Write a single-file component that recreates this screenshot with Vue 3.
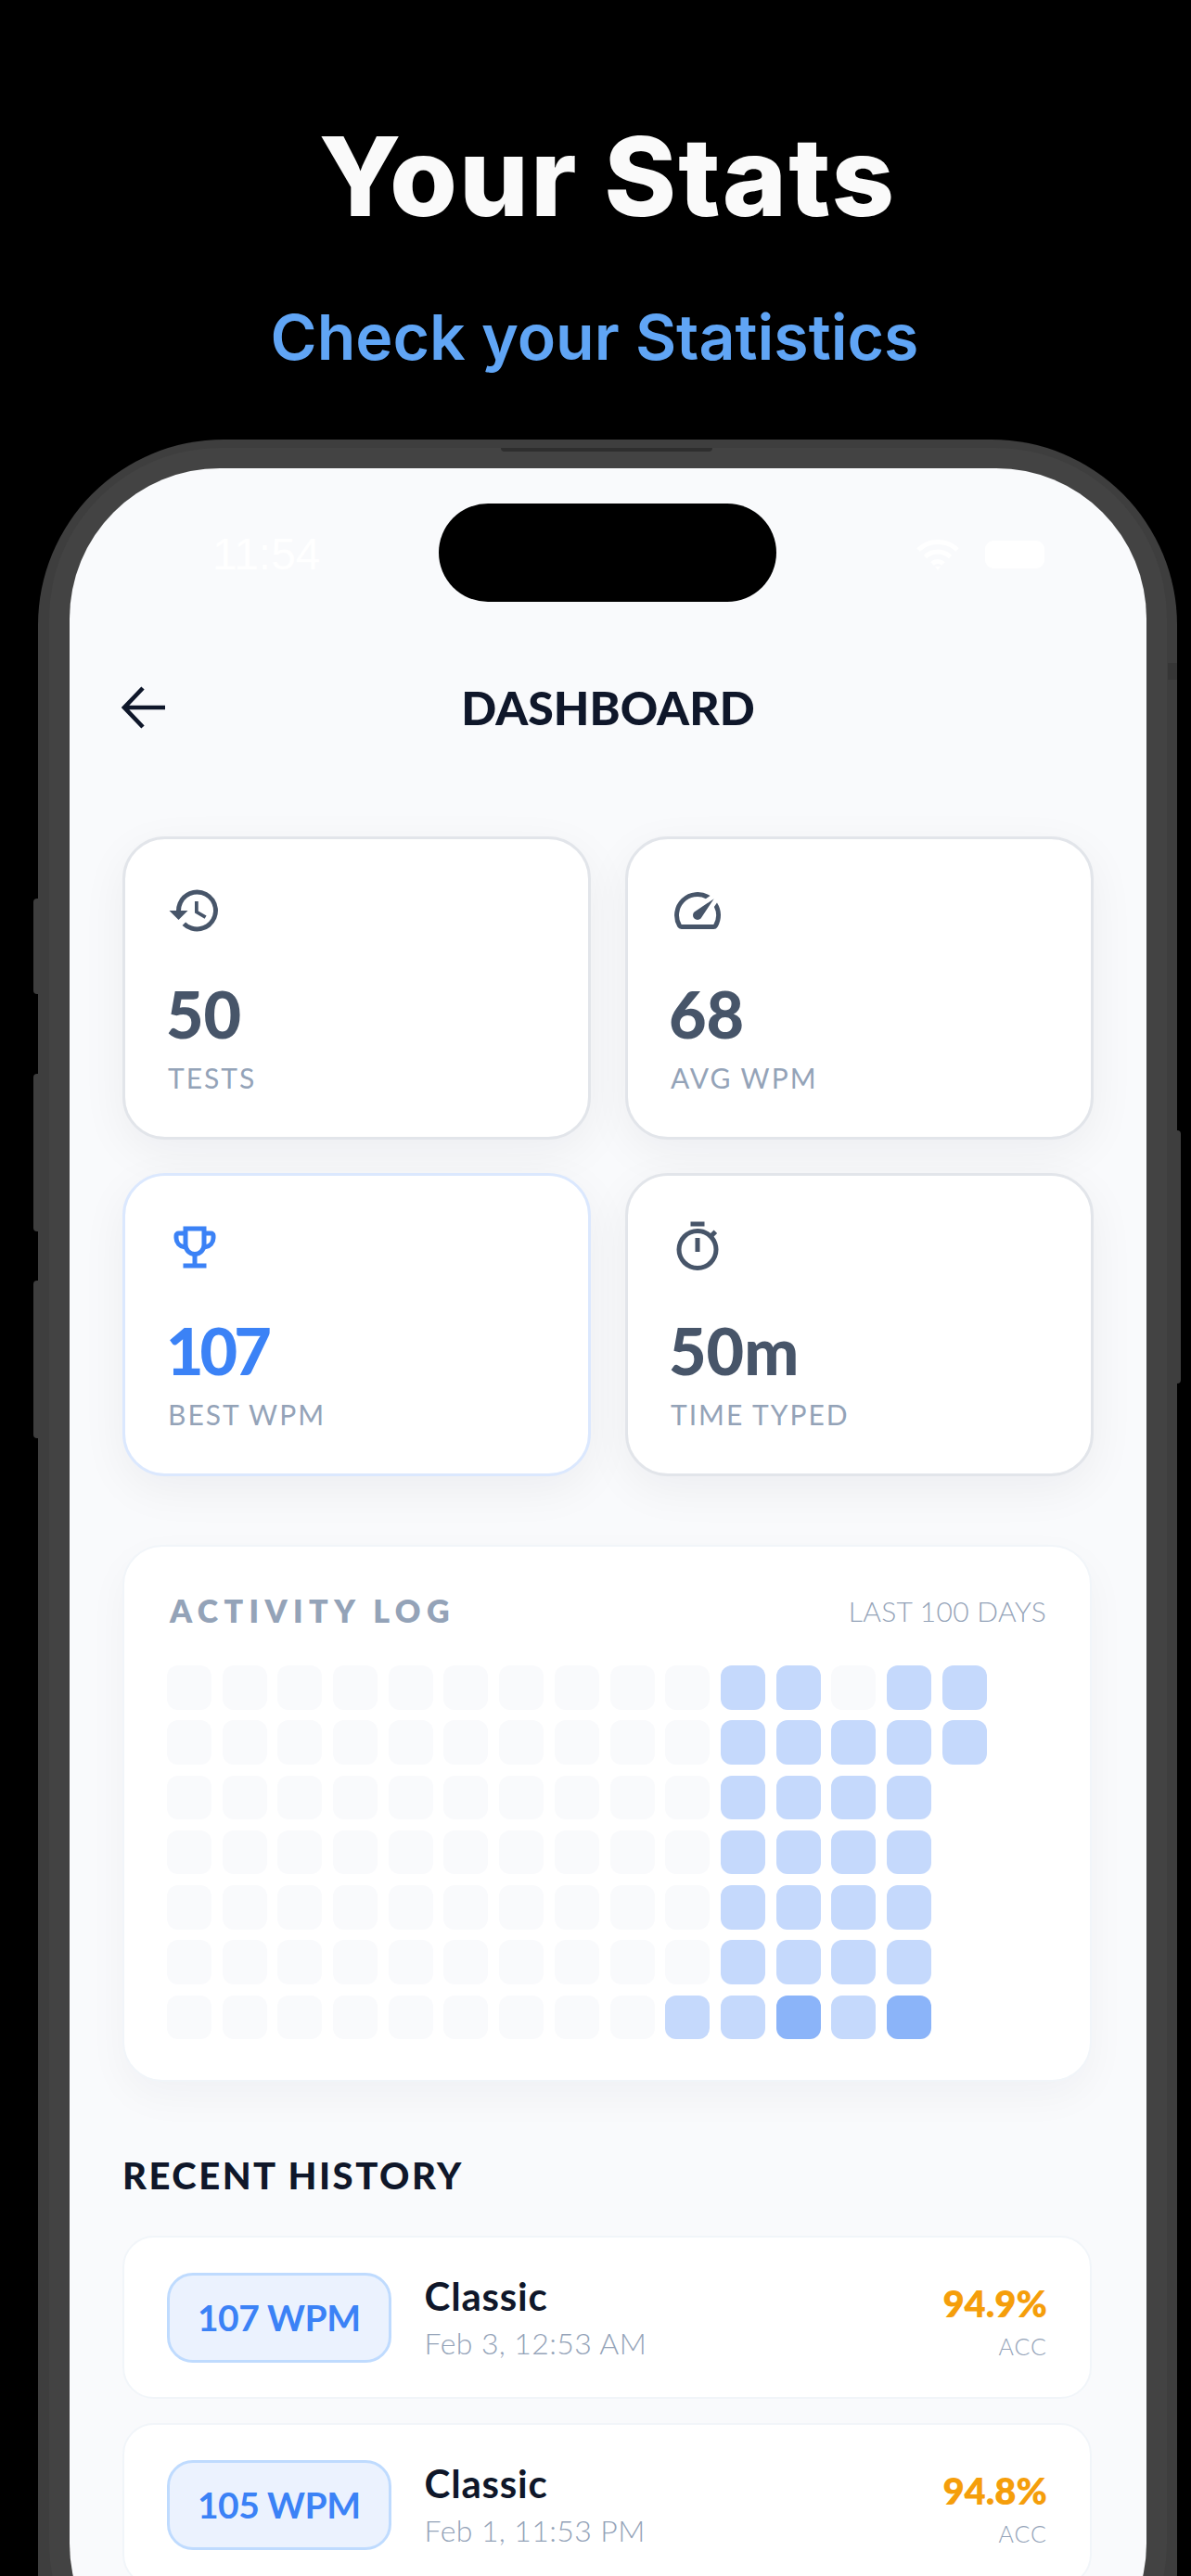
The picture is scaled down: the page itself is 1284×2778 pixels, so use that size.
<script setup>
const stats = [
  { value: '50', label: 'TESTS', icon: 'history' },
  { value: '68', label: 'AVG WPM', icon: 'gauge' },
  { value: '107', label: 'BEST WPM', icon: 'trophy', best: true },
  { value: '50m', label: 'TIME TYPED', icon: 'timer' },
]
const cells = []
for (let c = 0; c < 15; c++) {
  for (let r = 0; r < 7; r++) {
    if (c === 14 && r > 1) continue
    let k = ''
    if (c === 9 && r === 6) k = 'l'
    if (c >= 10 && c <= 13) k = 'l'
    if (c === 12 && r === 0) k = ''
    if ((c === 11 || c === 13) && r === 6) k = 'd'
    if (c === 14) k = 'l'
    cells.push(k)
  }
}
const history = [
  { wpm: '107 WPM', date: 'Feb 3, 12:53 AM', acc: '94.9%' },
  { wpm: '105 WPM', date: 'Feb 1, 11:53 PM', acc: '94.8%' },
]
</script>

<template>
  <div class="page">
    <header class="hero">
      <h1>Your Stats</h1>
      <p>Check your Statistics</p>
    </header>
    <div class="phone">
      <i class="btn b1"></i><i class="btn b2"></i><i class="btn b3"></i><i class="btn b4"></i>
      <i class="band"></i>
      <div class="screen">
        <div class="island"></div>
        <div class="status">
          <span class="time">11:54</span>
          <div class="sys">
            <svg width="48" height="36" viewBox="0 0 48 36" fill="none" stroke="#fff" stroke-width="5">
              <path d="M3 13a30 30 0 0 1 42 0"/>
              <path d="M10.500 20.500a19.500 19.500 0 0 1 27 0"/>
              <path d="M18 28a8.500 8.500 0 0 1 12 0"/>
              <path d="M24 35l-3-4h6z" fill="#fff" stroke="none"/>
            </svg>
            <i class="batt"></i>
          </div>
        </div>
        <div class="nav">
          <svg class="back" width="48" height="46" viewBox="0 0 48 46" fill="none" stroke="#0f172a" stroke-width="4.6"><path d="M47 23H3M23 2 3 23l20 21"/></svg>
          <h2>DASHBOARD</h2>
        </div>
        <div class="stats">
          <div v-for="s in stats" :key="s.label" class="stat" :class="{ best: s.best }">
            <svg class="ico" viewBox="0 0 24 24" fill="currentColor">
              <path v-if="s.icon === 'history'" d="M13 3a9 9 0 0 0-9 9H1l3.900 3.900.1.1 4-4H6a7 7 0 1 1 2.050 4.950l-1.420 1.420A9 9 0 1 0 13 3zm-1 5v5l4.250 2.520.77-1.280-3.520-2.090V8z"/>
              <path v-else-if="s.icon === 'gauge'" d="M20.380 8.570l-1.230 1.850a8 8 0 0 1-.22 7.580H5.070A8 8 0 0 1 15.580 6.850l1.850-1.230A10 10 0 0 0 3.350 19a2 2 0 0 0 1.720 1h13.850a2 2 0 0 0 1.740-1 10 10 0 0 0-.27-10.440zM10.590 15.410a2 2 0 0 0 2.830 0l5.660-8.490-8.490 5.660a2 2 0 0 0 0 2.830z"/>
              <path v-else-if="s.icon === 'trophy'" d="M19 5h-2V3H7v2H5a2 2 0 0 0-2 2v1a5 5 0 0 0 4.390 4.940A5 5 0 0 0 11 15.900V19H7v2h10v-2h-4v-3.100a5 5 0 0 0 3.610-2.960A5 5 0 0 0 21 8V7a2 2 0 0 0-2-2zM5 8V7h2v3.820A3 3 0 0 1 5 8zm10 3a3 3 0 0 1-6 0V5h6zm4-3a3 3 0 0 1-2 2.820V7h2z"/>
              <path v-else d="M15 1H9v2h6V1zm-4 13h2V8h-2v6zm8.030-6.610 1.420-1.420c-.43-.51-.9-.99-1.410-1.410l-1.420 1.420A8.960 8.960 0 0 0 12 4a9 9 0 1 0 9 9c0-2.120-.74-4.070-1.970-5.610zM12 20a7 7 0 1 1 0-14 7 7 0 0 1 0 14z"/>
            </svg>
            <div class="num">{{ s.value }}</div>
            <div class="lbl">{{ s.label }}</div>
          </div>
        </div>
        <section class="activity">
          <div class="ahead">
            <span class="atitle">ACTIVITY LOG</span>
            <span class="asub">LAST 100 DAYS</span>
          </div>
          <div class="grid">
            <i v-for="(k, i) in cells" :key="i" class="cell" :class="k"></i>
          </div>
        </section>
        <h3>RECENT HISTORY</h3>
        <div class="list">
          <div v-for="h in history" :key="h.date" class="row">
            <div class="badge">{{ h.wpm }}</div>
            <div class="info">
              <div class="mode">Classic</div>
              <div class="date">{{ h.date }}</div>
            </div>
            <div class="acc">
              <div class="pct">{{ h.acc }}</div>
              <div class="acclbl">ACC</div>
            </div>
          </div>
        </div>
      </div>
      <i class="speaker"></i>
    </div>
  </div>
</template>

<style>
html, body { margin: 0; background: #000; }
</style>

<style scoped>
.page {
  width: 1284px;
  height: 2778px;
  overflow: hidden;
  background: #000;
  font-family: Lato, "Noto Sans", sans-serif;
}
.hero { height: 474px; text-align: center; overflow: hidden; }
h1 {
  margin: 127px 0 0 26px;
  font: 800 118px/126px Inter, sans-serif;
  letter-spacing: 2px;
  color: #fafafa;
}
.hero p {
  margin: 70px 0 0 -2px;
  font: 600 68px/80px Inter, sans-serif;
  color: #60a5f5;
}
.phone {
  position: relative;
  margin-left: 41px;
  width: 1228px;
  height: 2500px;
  box-sizing: border-box;
  padding: 31px 33px 0 34px;
  background: #3e3e3e;
  border-radius: 200px;
}
.btn { position: absolute; background: #3e3e3e; }
.b1 { left: -5px; top: 495px; width: 5px; height: 103px; border-radius: 4px 0 0 4px; }
.b2 { left: -5px; top: 684px; width: 5px; height: 170px; border-radius: 4px 0 0 4px; }
.b3 { left: -5px; top: 907px; width: 5px; height: 170px; border-radius: 4px 0 0 4px; }
.b4 { right: -4px; top: 745px; width: 4px; height: 273px; border-radius: 0 4px 4px 0; }
.band { position: absolute; right: 0; top: 241px; width: 10px; height: 18px; background: #363636; }
.speaker {
  position: absolute;
  left: 499px;
  top: 9px;
  width: 228px;
  height: 4px;
  background: #2e2e2e;
  border-radius: 0 0 4px 4px;
}
.screen {
  position: relative;
  height: 2400px;
  background: #f9fafc;
  border-radius: 162px;
  box-sizing: border-box;
  padding: 75px 58px 0 58px;
  box-shadow: 0 0 0 22px #434343;
}
.island {
  position: absolute;
  left: 398px;
  top: 38px;
  width: 364px;
  height: 106px;
  background: #000;
  border-radius: 53px;
}
.status {
  display: flex;
  justify-content: space-between;
  align-items: center;
  height: 36px;
  padding: 0 52px 0 96px;
  color: #fff;
}
.time { font: 400 48px/36px "Liberation Sans", sans-serif; }
.sys { display: flex; align-items: center; gap: 27px; }
.batt { display: block; width: 64px; height: 30px; border-radius: 9px; background: #fff; }
.nav {
  position: relative;
  margin-top: 124px;
  height: 46px;
  display: flex;
  align-items: center;
  justify-content: center;
}
.back { position: absolute; left: -2px; top: 0; }
h2 {
  margin: 0;
  font: 900 50px/46px Lato, sans-serif;
  color: #0f172a;
}
.stats {
  margin-top: 116px;
  display: grid;
  grid-template-columns: 505px 505px;
  grid-auto-rows: 327px;
  column-gap: 37px;
  row-gap: 36px;
  margin-left: -1px;
}
.stat {
  box-sizing: border-box;
  padding: 50px 0 0 46px;
  background: #fff;
  border: 3px solid #e2e5ea;
  border-radius: 46px;
  box-shadow: 0 14px 50px rgba(15, 23, 42, 0.055);
  color: #475569;
}
.stat.best { border-color: #dbe8fe; color: #3b82f6; }
.ico { display: block; width: 60px; height: 60px; margin-left: -1px; margin-top: -3px; }
.num { margin-top: 43px; margin-left: -2px; font: 900 70px/76px Lato, sans-serif; }
.best .num { letter-spacing: -4px; }
.lbl { margin-top: 13px; font: 400 30px/36px Lato, sans-serif; letter-spacing: 2px; color: #94a3b8; }
.activity {
  box-sizing: border-box;
  margin-top: 74px;
  height: 579px;
  margin-left: -1px;
  width: 1045px;
  padding: 54px 47px 0 46px;
  background: #fff;
  border: 2px solid #f1f5f9;
  border-radius: 43px;
  box-shadow: 0 16px 44px rgba(15, 23, 42, 0.04);
}
.ahead { display: flex; justify-content: space-between; align-items: center; height: 30px; }
.atitle { margin-left: 3px; font: 800 34px/30px Lato, sans-serif; letter-spacing: 6.400px; color: #94a3b8; }
.asub { font: 300 30px/30px Lato, sans-serif; letter-spacing: 0.300px; color: #94a3b8; }
.grid {
  margin-top: 44px;
  display: grid;
  grid-auto-flow: column;
  grid-template-rows: repeat(7, 47.500px);
  grid-auto-columns: 48px;
  column-gap: 11.700px;
  row-gap: 11.800px;
}
.cell { display: block; background: #f9fafc; border-radius: 12px; }
.cell.l { background: #c5d9fc; }
.cell.d { background: #8bb4f9; }
h3 {
  margin: 81px 0 0 -1px;
  font: 900 40px/40px Lato, sans-serif;
  letter-spacing: 2.500px;
  color: #0f172a;
}
.list { margin-top: 45px; display: flex; flex-direction: column; gap: 26px; margin-left: -1px; width: 1045px; }
.row {
  box-sizing: border-box;
  flex: none;
  height: 176px;
  display: flex;
  align-items: center;
  padding: 0 46px 0 46px;
  background: #fff;
  border: 2px solid #f1f5f9;
  border-radius: 34px;
}
.badge {
  box-sizing: border-box;
  height: 97px;
  padding: 0 30px;
  display: flex;
  align-items: center;
  background: #ebf2fe;
  border: 3px solid #bfdbfe;
  border-radius: 28px;
  font: 700 39px/1 Lato, sans-serif;
  letter-spacing: -0.500px;
  color: #3b82f6;
}
.info { margin-left: 36px; flex: 1; }
.mode { font: 700 42px/48px Lato, sans-serif; letter-spacing: 0.800px; color: #0f172a; }
.date { margin-top: 7px; font: 300 32px/40px Lato, sans-serif; letter-spacing: 0.400px; color: #94a3b8; }
.acc { text-align: right; padding-top: 7px; }
.pct { font: 800 40px/48px Lato, sans-serif; color: #f59e0b; }
.acclbl { margin-top: 7.500px; font: 300 25px/30px Lato, sans-serif; color: #94a3b8; letter-spacing: 1px; }
</style>
